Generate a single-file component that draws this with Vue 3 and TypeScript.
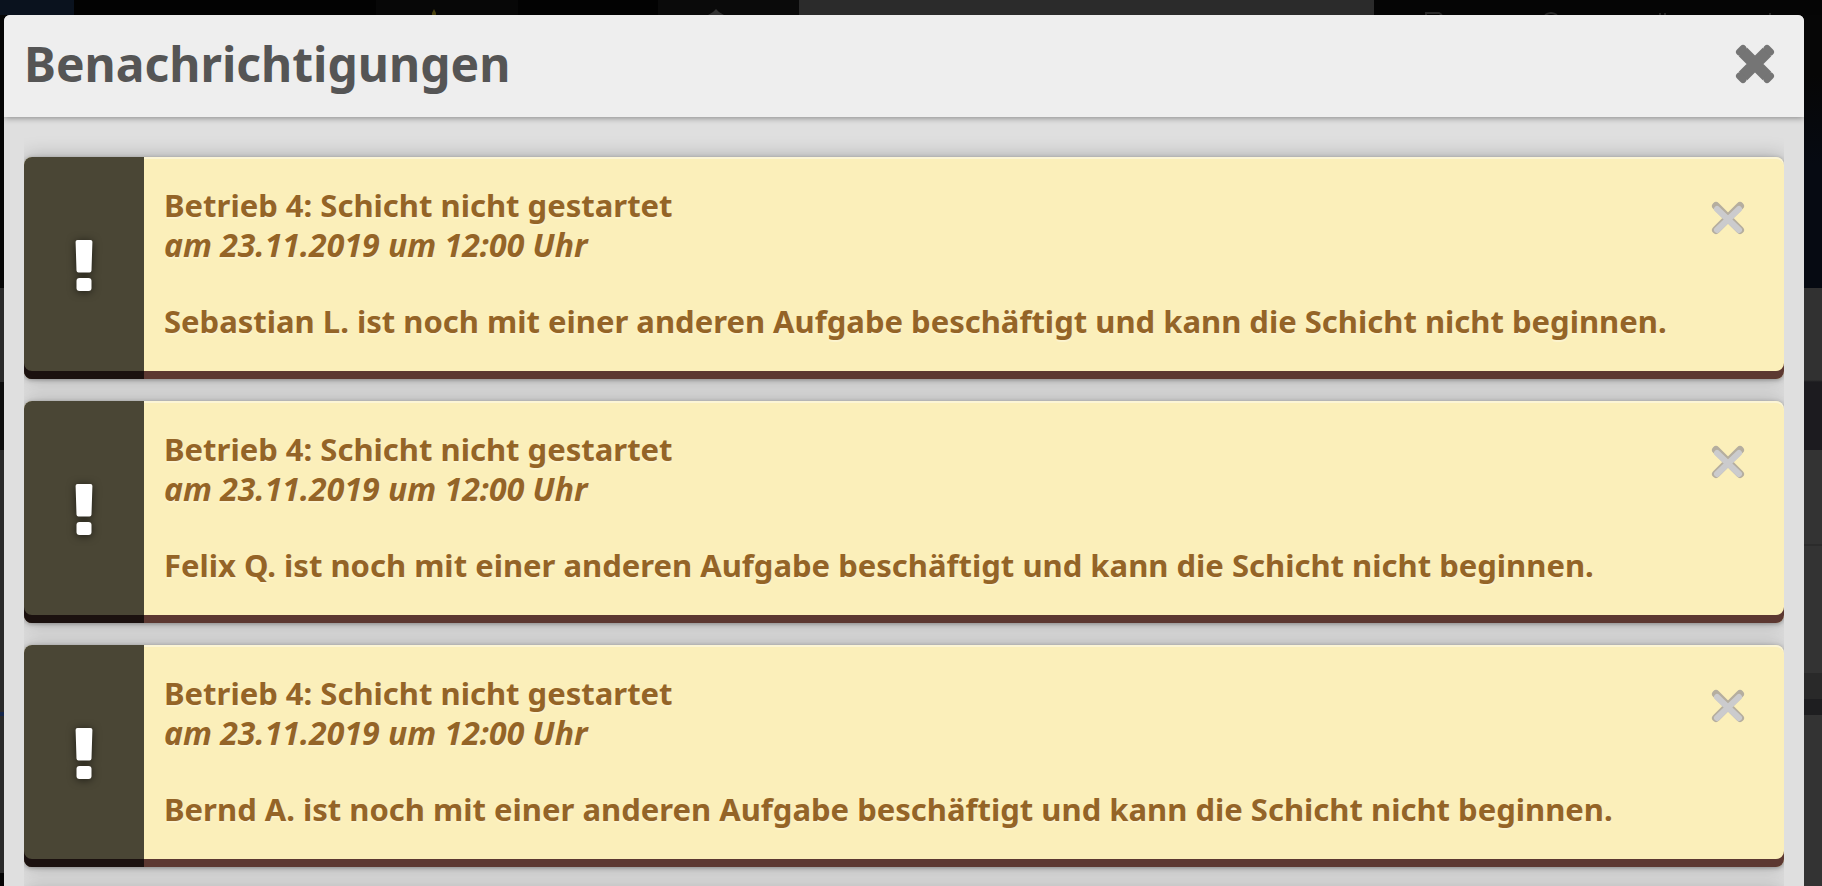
<script setup lang="ts">
interface Notice {
  id: number
  title: string
  time: string
  text: string
}

const task = 'ist noch mit einer anderen Aufgabe beschäftigt und kann die Schicht nicht beginnen.'

const notices: Notice[] = ['Sebastian L.', 'Felix Q.', 'Bernd A.'].map((name, index) => ({
  id: index + 1,
  title: 'Betrieb 4: Schicht nicht gestartet',
  time: 'am 23.11.2019 um 12:00 Uhr',
  text: `${name} ${task}`,
}))
</script>

<template>
  <div class="screen">
    <div class="backdrop" aria-hidden="true">
      <div class="topbar">
        <span class="tab scene"></span>
        <span class="tab star">
          <svg width="6" height="6" viewBox="0 0 6 6"><path d="M3 0 5 4V6H1V4Z" /></svg>
        </span>
        <span class="tab home">
          <svg width="16" height="6" viewBox="0 0 16 6"><path d="M8 0 11 3 16 6H0L5 3Z" /></svg>
        </span>
        <span class="tab field"></span>
        <span class="tab tools">
          <svg width="18" height="3" viewBox="0 0 18 3"><path d="M1 3V1H14L17 3" /></svg>
          <svg width="14" height="3" viewBox="0 0 14 3"><path d="M1 3Q7-1 13 3" /></svg>
          <svg width="8" height="3" viewBox="0 0 8 3"><path d="M1 3V1M6 3V1" /></svg>
          <svg width="4" height="3" viewBox="0 0 4 3"><path d="M2 3V1" /></svg>
        </span>
      </div>
      <div class="sides">
        <div class="side left"></div>
        <div class="side right"></div>
      </div>
    </div>

    <section class="dialog" role="dialog" aria-labelledby="dialog-title">
      <header class="head">
        <h1 id="dialog-title">Benachrichtigungen</h1>
        <button class="close" type="button" aria-label="Schließen">
          <svg width="40" height="40" viewBox="0 0 40 40" fill="none" stroke="#757575">
            <path d="M8 8 32 32M32 8 8 32" stroke-width="12" />
            <path d="M8 4.500 4.500 8M32 4.500 35.500 8M8 35.500 4.500 32M32 35.500 35.500 32" stroke-width="7" stroke-linecap="round" />
          </svg>
        </button>
      </header>

      <div class="list">
        <article v-for="notice in notices" :key="notice.id" class="notice">
          <div class="mark" aria-hidden="true">
            <svg width="20" height="54" viewBox="0 0 20 54">
              <path d="M3.500 1h13q2 0 1.900 2l-.9 28.500q-.1 2-2 2h-11q-1.900 0-2-2L1.600 3q-.1-2 1.900-2Z" />
              <rect x="2.500" y="39" width="15" height="13" rx="3" />
            </svg>
          </div>
          <div class="body">
            <p class="title">{{ notice.title }}</p>
            <p class="time">{{ notice.time }}</p>
            <p class="text">{{ notice.text }}</p>
          </div>
          <button class="dismiss" type="button" aria-label="Benachrichtigung entfernen">
            <svg width="34" height="34" viewBox="0 0 34 34" fill="none" stroke-linecap="round">
              <path d="M5 5 29 29M29 5 5 29" stroke="#b5ae9f" stroke-width="8" />
              <path d="M6 8 28 29M28 8 6 29" stroke="#cbcbcd" stroke-width="6" />
            </svg>
          </button>
        </article>
        <article class="notice" aria-hidden="true"><div class="mark"></div></article>
      </div>
    </section>
  </div>
</template>

<style>
body {
  margin: 0;
  background: #000;
}
</style>

<style scoped>
.screen {
  position: relative;
  box-sizing: border-box;
  height: 100vh;
  padding: 15px 18px 0 4px;
  overflow: hidden;
  font-family: "Noto Sans", "Open Sans", sans-serif;
}

.backdrop {
  position: absolute;
  inset: 0;
  display: flex;
  flex-direction: column;
  background: #050505;
}

.topbar {
  display: flex;
  height: 15px;
}

.tab {
  display: flex;
  align-items: flex-end;
  justify-content: center;
  box-sizing: border-box;
}

.scene {
  flex: 0 0 74px;
  background: #0a121e;
}

.star {
  flex: 0 0 584px;
  padding-left: 136px;
  background: linear-gradient(90deg, #020202 302px, #070707 302px 444px, #020202 444px);
}

.star svg {
  fill: #4a4210;
}

.home {
  flex: 0 0 141px;
  padding-right: 26px;
  background: #0a0a0a;
}

.home svg {
  fill: #333;
}

.field {
  flex: 1;
  background: #2b2b2b;
}

.tools {
  flex: 0 0 448px;
  justify-content: space-around;
}

.tools svg {
  fill: none;
  stroke: #292929;
  stroke-width: 2;
}

.sides {
  display: flex;
  flex: 1;
  justify-content: space-between;
}

.side {
  width: 18px;
}

.left {
  background: linear-gradient(#050505 273px, #2a2a2a 273px 367px, #0d0d0d 367px 435px, #2a2a2a 435px 697px, #14254a 697px 701px, #2a2a2a 701px 858px, #050505 858px);
}

.right {
  background: linear-gradient(#060606 60px, #060a12 150px 273px, #313131 273px 365px, #1c1b1f 367px 435px, #333 435px 529px, #2b2b2b 529px 531px, #333 531px 658px, #292929 658px 684px, #1e1e20 684px 700px, #333 700px);
}

.dialog {
  position: relative;
  height: 100%;
  overflow: hidden;
  border-radius: 6px 6px 0 0;
  background: #dfdfdf;
}

.head {
  position: relative;
  display: flex;
  align-items: center;
  justify-content: space-between;
  box-sizing: border-box;
  height: 102px;
  padding: 0 29px 4px 20px;
  background: #eee;
  box-shadow: 0 1px 6px rgba(0, 0, 0, 0.4);
}

h1 {
  margin: 0;
  color: #555;
  font-size: 48px;
  line-height: 64px;
}

button {
  display: flex;
  padding: 0;
  border: 0;
  background: none;
  cursor: pointer;
}

svg {
  display: block;
}

.list {
  display: flex;
  flex-direction: column;
  gap: 22px;
  margin: 0 20px;
  padding-top: 40px;
  overflow: hidden;
}

.notice {
  position: relative;
  display: flex;
  align-items: flex-start;
  box-sizing: border-box;
  min-height: 222px;
  border-radius: 8px;
  background: #fbefba;
  box-shadow: 0 0 20px rgba(0, 0, 0, 0.25), 0 1px 4px rgba(0, 0, 0, 0.3);
}

.notice::after {
  content: "";
  position: absolute;
  inset: 0;
  border-radius: 8px;
  box-shadow: inset 0 -8px #5c3831, inset 0 2px rgba(255, 255, 255, 0.4);
}

.mark {
  position: relative;
  z-index: 1;
  display: flex;
  align-items: center;
  align-self: stretch;
  justify-content: center;
  flex: 0 0 120px;
  box-sizing: border-box;
  padding-bottom: 4px;
  border-radius: 8px 0 0 8px;
  background: #4a4635;
  box-shadow: inset 0 -8px #1b110f;
}

.mark svg {
  fill: #fff;
  filter: drop-shadow(0 1px 4px rgba(0, 0, 0, 0.6));
}

.body {
  flex: 1;
  padding: 28px 0 0 20px;
  color: #946427;
  font-size: 31px;
  font-weight: 700;
  line-height: 40px;
  text-shadow: 0 2px 1px rgba(255, 255, 255, 0.3);
  white-space: nowrap;
}

p {
  margin: 0;
}

.time {
  font-size: 32px;
  font-style: italic;
}

.text {
  margin-top: 36px;
}

.dismiss {
  position: relative;
  z-index: 1;
  margin: 44px 39px 0 0;
}
</style>
